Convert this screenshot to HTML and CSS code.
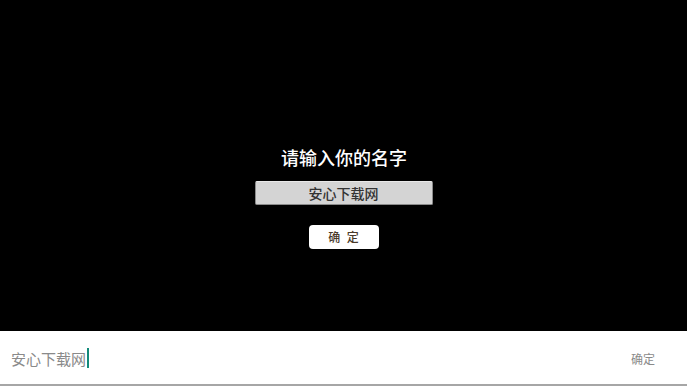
FILE: index.html
```html
<html>
  <head>
    <meta charset="utf-8">
    <link rel="stylesheet" href="styles.css">
    <title>请输入你的名字</title>
  </head>
  <body>
    <div class="stage">
      <div class="prompt">请输入你的名字</div>
      <div class="name-box">安心下载网</div>
      <div class="ok-btn">确 定</div>
    </div>
    <div class="ime-bar">
      <div class="ime-text">安心下载网<span class="caret"></span></div>
      <div class="ime-ok">确定</div>
    </div>
  </body>
</html>
```

FILE: styles.css
```css
body {
  margin: 0;
  background: #000;
  font-family: "Noto Sans CJK SC", "Noto Sans", sans-serif;
}

.stage {
  height: 331px;
  display: flex;
  flex-direction: column;
  align-items: center;
  padding-top: 145px;
  box-sizing: border-box;
}

.prompt {
  color: #fff;
  font-size: 18px;
  line-height: 25px;
  font-weight: 500;
  margin-left: 1px;
}

.name-box {
  margin-top: 11px;
  width: 178px;
  height: 24px;
  box-sizing: border-box;
  background: #d4d4d4;
  border: 1px solid #8a8a8a;
  border-top-color: #e8e8e8;
  border-radius: 2px;
  color: #333;
  font-size: 14px;
  font-weight: 500;
  line-height: 22px;
  text-align: center;
}

.ok-btn {
  margin-top: 20px;
  width: 70px;
  height: 24px;
  background: #fff;
  border-radius: 4px;
  color: #4a3a2a;
  font-size: 12px;
  font-weight: 500;
  line-height: 24px;
  text-align: center;
  letter-spacing: 2px;
  text-indent: 2px;
}

.ime-bar {
  height: 53px;
  background: #fff;
  border-bottom: 2px solid #a6a6a6;
  display: flex;
  align-items: center;
  justify-content: space-between;
  padding: 0 32px 0 11px;
}

.ime-text {
  color: #8a8a8a;
  font-size: 15px;
  display: flex;
  align-items: center;
  margin-top: 1px;
}

.caret {
  display: inline-block;
  width: 2px;
  height: 20px;
  background: #128a7a;
  margin-left: 1px;
}

.ime-ok {
  color: #8a8a8a;
  font-size: 12px;
  margin-top: 1px;
}
```
